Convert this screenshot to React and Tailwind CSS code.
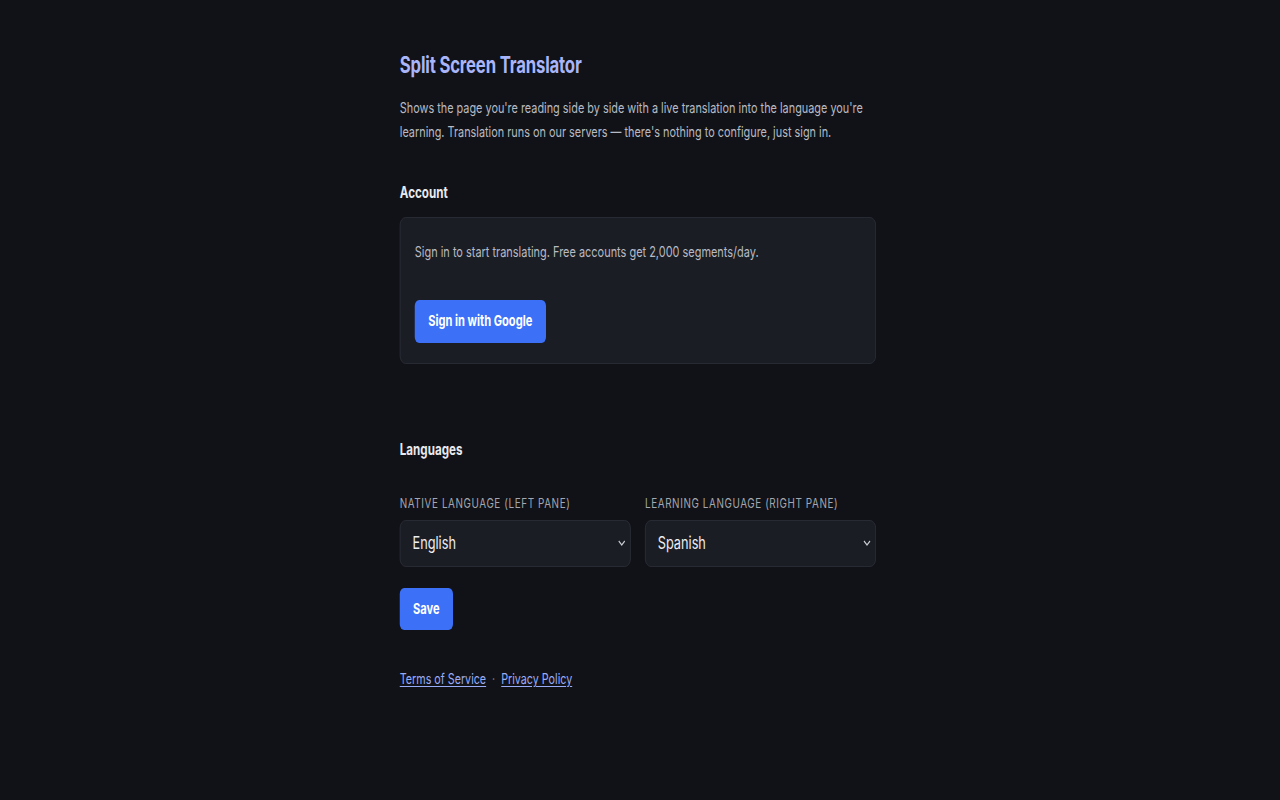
import { useState } from 'react';

const LANGS = ['English', 'Spanish', 'French', 'German', 'Italian', 'Portuguese', 'Japanese', 'Korean', 'Chinese'];

function LangSelect({ label, value, onChange }) {
  return (
    <label className="flex flex-col">
      <span className="text-[13.2px] uppercase tracking-[0.06em] text-[#a3a7b0] mb-[7px] leading-5">{label}</span>
      <div className="relative">
        <select
          value={value}
          onChange={(e) => onChange(e.target.value)}
          className="w-full h-[47px] appearance-none rounded-lg border border-[#2b2e37] bg-[#1b1d25] pl-4 pr-10 text-[17px] text-[#eceef2] outline-none"
        >
          {LANGS.map((l) => (
            <option key={l}>{l}</option>
          ))}
        </select>
        <svg className="pointer-events-none absolute right-[6px] top-[19px] w-[12px] h-[8px] text-[#c9ccd3]" viewBox="0 0 12 8" fill="none" stroke="currentColor" strokeWidth="1.5">
          <path d="M2 2l4 4 4-4" />
        </svg>
      </div>
    </label>
  );
}

export default function App() {
  const [native, setNative] = useState('English');
  const [learning, setLearning] = useState('Spanish');

  return (
    <div className="w-full h-screen overflow-hidden bg-[#111217]" style={{ fontFamily: 'Inter, "Noto Sans", sans-serif' }}>
      {/* page was laid out wide and squeezed to 1280 */}
      <div className="w-[1701px] h-full origin-top-left scale-x-75">
        <div className="w-[635px] mx-auto pt-[50px]">
          <h1 className="text-[22.3px] font-bold leading-[30px] text-[#a8b5fb] tracking-[-0.01em]">Split Screen Translator</h1>
          <p className="mt-[16px] text-[14.5px] leading-6 text-[#b7bac2]">
            Shows the page you're reading side by side with a live translation into the language you're learning. Translation runs on our servers — there's nothing to configure, just sign in.
          </p>

          <h2 className="mt-[37px] text-[15.5px] font-bold leading-6 text-[#e7e9ee]">Account</h2>
          <div className="mt-[12px] rounded-lg border border-[#2b2e37] bg-[#1b1d25] px-[19px] pt-[22px] pb-[20px]">
            <p className="text-[14.6px] leading-6 text-[#b7bac2]">Sign in to start translating. Free accounts get 2,000 segments/day.</p>
            <button className="mt-[36px] h-[43px] px-[18px] rounded-md bg-[#3c71f7] text-[14.8px] font-bold text-white">Sign in with Google</button>
          </div>

          <h2 className="mt-[74px] text-[15.5px] font-bold leading-6 text-[#e7e9ee]">Languages</h2>
          <div className="mt-[31px] grid grid-cols-2 gap-[19px]">
            <LangSelect label="Native language (left pane)" value={native} onChange={setNative} />
            <LangSelect label="Learning language (right pane)" value={learning} onChange={setLearning} />
          </div>

          <button className="mt-[21px] h-[42px] w-[71px] rounded-md bg-[#3c71f7] text-[14.8px] font-bold text-white">Save</button>

          <div className="mt-[37px] flex items-center gap-[8px] text-[14.3px] leading-6">
            <a href="#" className="text-[#98abf7] underline underline-offset-2">Terms of Service</a>
            <span className="text-[#7d818a]">·</span>
            <a href="#" className="text-[#98abf7] underline underline-offset-2">Privacy Policy</a>
          </div>
        </div>
      </div>
    </div>
  );
}
